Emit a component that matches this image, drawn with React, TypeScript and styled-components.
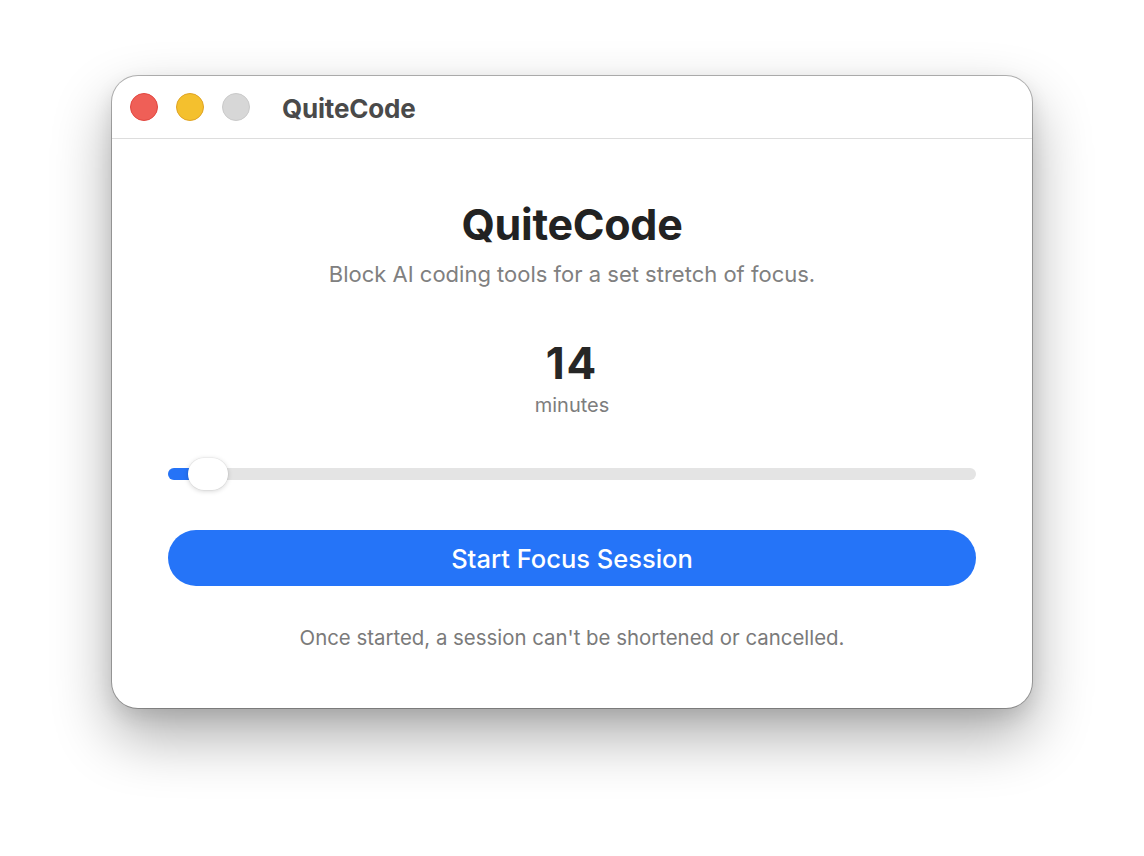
import * as React from "react";
import styled, { createGlobalStyle } from "styled-components";

const GlobalStyle = createGlobalStyle`
  html, body {
    margin: 0;
    padding: 0;
    background: #ffffff;
  }
  body {
    font-family: Inter, "Noto Sans", "Liberation Sans", sans-serif;
    -webkit-font-smoothing: antialiased;
  }
`;

const Page = styled.div`
  width: 1144px;
  height: 856px;
  padding-top: 76px;
  box-sizing: border-box;
  display: flex;
  justify-content: center;
  align-items: flex-start;
`;

const Window = styled.div`
  width: 920px;
  height: 632px;
  border-radius: 26px;
  background: #ffffff;
  overflow: hidden;
  display: flex;
  flex-direction: column;
  box-shadow: 0 0 0 1px rgba(0, 0, 0, 0.28), 0 28px 60px rgba(0, 0, 0, 0.33),
    0 8px 20px rgba(0, 0, 0, 0.1);
`;

const TitleBar = styled.div`
  height: 62px;
  flex-shrink: 0;
  display: flex;
  align-items: center;
  padding-left: 18px;
  border-bottom: 1px solid #dddddd;
`;

const Lights = styled.div`
  display: flex;
  gap: 18px;
  margin-right: 32px;
`;

const Light = styled.span<{ $fill: string; $edge: string }>`
  width: 28px;
  height: 28px;
  border-radius: 50%;
  box-sizing: border-box;
  background: ${(p) => p.$fill};
  border: 1px solid ${(p) => p.$edge};
`;

const WindowTitle = styled.div`
  font-size: 26px;
  font-weight: 700;
  color: #4a4a4a;
  letter-spacing: -0.2px;
  margin-top: 2px;
`;

const Body = styled.div`
  flex: 1;
  display: flex;
  flex-direction: column;
  align-items: center;
  padding: 60px 56px 0;
`;

const Heading = styled.h1`
  margin: 0;
  font-size: 43px;
  line-height: 50px;
  font-weight: 700;
  color: #222222;
  letter-spacing: -0.3px;
`;

const Subtitle = styled.p`
  margin: 12px 0 0;
  font-size: 22px;
  line-height: 26px;
  color: #808080;
`;

const Value = styled.div`
  margin-top: 51px;
  font-size: 44px;
  line-height: 50px;
  font-weight: 700;
  color: #262626;
  letter-spacing: 2px;
`;

const Unit = styled.div`
  margin-top: 5px;
  font-size: 20px;
  line-height: 24px;
  color: #7d7d7d;
`;

const Slider = styled.div`
  position: relative;
  margin-top: 41px;
  width: 100%;
  height: 32px;
  display: flex;
  align-items: center;
`;

const Track = styled.div`
  position: relative;
  width: 100%;
  height: 12px;
  border-radius: 6px;
  background: #e4e4e4;
  overflow: hidden;
`;

const Fill = styled.div`
  height: 100%;
  background: #2573f7;
`;

const Thumb = styled.div`
  position: absolute;
  top: 0;
  width: 40px;
  height: 32px;
  border-radius: 16px;
  background: #ffffff;
  box-shadow: 0 1px 5px rgba(0, 0, 0, 0.18), 0 0 0 0.5px rgba(0, 0, 0, 0.06);
`;

const StartButton = styled.button`
  margin-top: 40px;
  width: 100%;
  height: 56px;
  border: none;
  border-radius: 28px;
  background: #2574f8;
  color: #ffffff;
  font-family: inherit;
  font-size: 25.5px;
  font-weight: 500;
  cursor: pointer;
`;

const Note = styled.p`
  margin: 40px 0 0;
  font-size: 20.4px;
  line-height: 24px;
  color: #7a7a7a;
`;

const MIN = 10;
const MAX = 160;
const THUMB = 40;

const App: React.FC = () => {
  const [minutes] = React.useState(14);
  const ratio = (minutes - MIN) / (MAX - MIN);

  return (
    <>
      <GlobalStyle />
      <Page>
        <Window>
          <TitleBar>
            <Lights>
              <Light $fill="#ef5f57" $edge="#e1463f" />
              <Light $fill="#f4c02e" $edge="#dfa324" />
              <Light $fill="#d7d7d7" $edge="#c9c9c9" />
            </Lights>
            <WindowTitle>QuiteCode</WindowTitle>
          </TitleBar>
          <Body>
            <Heading>QuiteCode</Heading>
            <Subtitle>Block AI coding tools for a set stretch of focus.</Subtitle>
            <Value>{minutes}</Value>
            <Unit>minutes</Unit>
            <Slider>
              <Track>
                <Fill
                  style={{ width: `calc(${ratio} * (100% - ${THUMB}px) + ${THUMB / 2}px)` }}
                />
              </Track>
              <Thumb style={{ left: `calc(${ratio} * (100% - ${THUMB}px))` }} />
            </Slider>
            <StartButton>Start Focus Session</StartButton>
            <Note>Once started, a session can't be shortened or cancelled.</Note>
          </Body>
        </Window>
      </Page>
    </>
  );
};

export default App;
